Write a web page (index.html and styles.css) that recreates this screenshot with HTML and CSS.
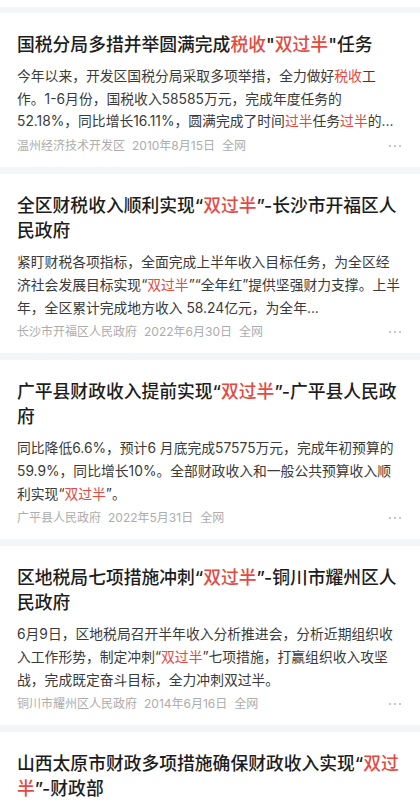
FILE: index.html
```html
<!DOCTYPE html>
<html lang="zh-CN">
<head>
<meta charset="utf-8">
<title>双过半</title>
<link rel="stylesheet" href="styles.css">
</head>
<body>
<div class="feed">
  <div class="tail"></div>

  <div class="card">
    <h2 class="title">国税分局多措并举圆满完成<em>税收</em>"<em>双过半</em>"任务</h2>
    <p class="body">今年以来，开发区国税分局采取多项举措，全力做好<em>税收</em>工作。1-6月份，国税收入58585万元，完成年度任务的<br>52.18%，同比增长16.11%，圆满完成了时间<em>过半</em>任务<em>过半</em>的...</p>
    <div class="meta"><span>温州经济技术开发区</span><span>2010年8月15日</span><span>全网</span><i class="more"><b></b><b></b><b></b></i></div>
  </div>

  <div class="card">
    <h2 class="title">全区财税收入顺利实现“<em>双过半</em>”-长沙市开福区人民政府</h2>
    <p class="body">紧盯财税各项指标，全面完成上半年收入目标任务，为全区经济社会发展目标实现“<em>双过半</em>”“全年红”提供坚强财力支撑。上半年，全区累计完成地方收入 58.24亿元，为全年...</p>
    <div class="meta"><span>长沙市开福区人民政府</span><span>2022年6月30日</span><span>全网</span><i class="more"><b></b><b></b><b></b></i></div>
  </div>

  <div class="card">
    <h2 class="title">广平县财政收入提前实现“<em>双过半</em>”-广平县人民政府</h2>
    <p class="body">同比降低6.6%，预计6 月底完成57575万元，完成年初预算的59.9%，同比增长10%。全部财政收入和一般公共预算收入顺利实现“<em>双过半</em>”。</p>
    <div class="meta"><span>广平县人民政府</span><span>2022年5月31日</span><span>全网</span><i class="more"><b></b><b></b><b></b></i></div>
  </div>

  <div class="card">
    <h2 class="title">区地税局七项措施冲刺“<em>双过半</em>”-铜川市耀州区人民政府</h2>
    <p class="body">6月9日，区地税局召开半年收入分析推进会，分析近期组织收入工作形势，制定冲刺“<em>双过半</em>”七项措施，打赢组织收入攻坚战，完成既定奋斗目标，全力冲刺双过半。</p>
    <div class="meta"><span>铜川市耀州区人民政府</span><span>2014年6月16日</span><span>全网</span><i class="more"><b></b><b></b><b></b></i></div>
  </div>

  <div class="card">
    <h2 class="title">山西太原市财政多项措施确保财政收入实现“<em>双过半</em>”-财政部</h2>
    <p class="body">上半年，太原市财政多项措施确保财政收入实现“双过半”，一般公共预算收入完成全年预算的百分之五十以上。</p>
  </div>
</div>
</body>
</html>
```

FILE: styles.css
```css
* { box-sizing: border-box; }
html, body {
  margin: 0;
  padding: 0;
  background: #f4f5f7;
}
body {
  font-family: Inter, "Noto Sans CJK SC", sans-serif;
  width: 420px;
  height: 800px;
  overflow: hidden;
}
.feed {
  display: flex;
  flex-direction: column;
  gap: 7px;
}
.tail {
  height: 7px;
  background: #fff;
  margin-bottom: -1px;
}
.card {
  background: #fff;
  padding: 19px 16px 13px 17px;
}
.title {
  margin: 0;
  font-size: 17.8px;
  line-height: 25px;
  font-weight: 500;
  color: #1d1d1d;
}
em {
  font-style: normal;
  color: #e5493f;
}
.body {
  margin: 8px 1px 0 0;
  font-size: 13.8px;
  line-height: 22.7px;
  color: #3a3a3a;
}
.meta {
  margin-top: 5px;
  display: flex;
  align-items: center;
  gap: 7px;
  font-size: 12px;
  line-height: 16px;
  color: #adadad;
}
.more {
  margin-left: auto;
  margin-right: 3px;
  display: flex;
  gap: 3px;
}
.more b {
  width: 2px;
  height: 2px;
  border-radius: 50%;
  background: #b5b5b5;
}
```
